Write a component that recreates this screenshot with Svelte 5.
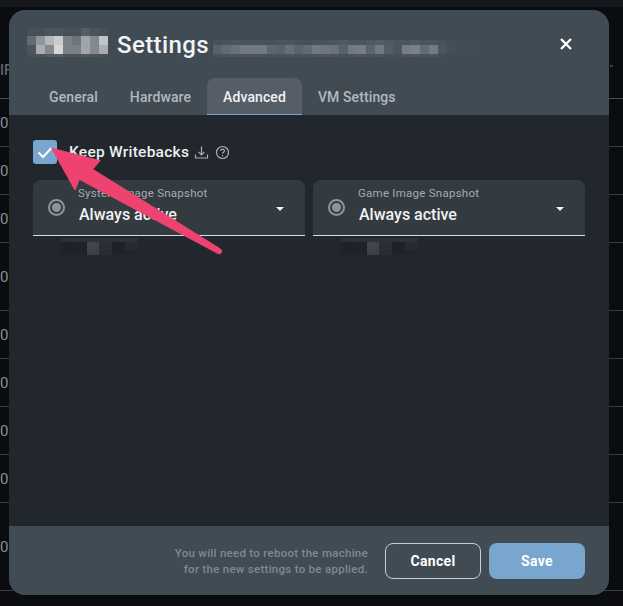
<script lang="ts">
  const rowHeights = [48, 48, 48, 68, 48, 48, 48, 48, 88];
  const tabs = ['General', 'Hardware', 'Advanced', 'VM Settings'];
  const selects = [
    { label: 'System Image Snapshot', value: 'Always active' },
    { label: 'Game Image Snapshot', value: 'Always active' }
  ];

  // pixelated bits of the redacted text, values are white opacity per cell
  const titleCells = [
    [0.03, 0.03, 0.06, 0.05, 0.03, 0.03, 0.1, 0.05, 0.03],
    [0.18, 0.42, 0.6, 0.72, 0.3, 0.24, 0.5, 0.35, 0.68],
    [0.06, 0.55, 0.35, 0.78, 0.3, 0.3, 0.5, 0.35, 0.55],
    [0.03, 0.05, 0.1, 0.1, 0.05, 0.05, 0.08, 0.05, 0.03]
  ];
  const subtitleCells = [
    [0.04, 0.05, 0.05, 0.05, 0.05, 0.04, 0.04, 0.05, 0.06, 0.04, 0.03, 0.05, 0.05, 0.06, 0.08, 0.06, 0.06, 0.08, 0.1, 0.08, 0.06, 0.06, 0.08, 0.06, 0.05, 0.03, 0.01, 0.01],
    [0.12, 0.18, 0.22, 0.26, 0.26, 0.26, 0.15, 0.12, 0.2, 0.14, 0.18, 0.26, 0.24, 0.22, 0.12, 0.26, 0.28, 0.14, 0.26, 0.1, 0.06, 0.28, 0.3, 0.18, 0.26, 0.06, 0.02, 0.01, 0.01],
    [0.04, 0.05, 0.06, 0.06, 0.06, 0.05, 0.04, 0.04, 0.05, 0.04, 0.04, 0.05, 0.06, 0.05, 0.04, 0.05, 0.06, 0.04, 0.05, 0.03, 0.03, 0.06, 0.06, 0.04, 0.05, 0.01]
  ];
  const hintCells = [
    [0.05, 0.05, 0.05, 0.05, 0.05, 0.05],
    [-0.12, -0.1, 0.14, 0.04, -0.12, 0.02],
    [-0.08, -0.1, 0.12, 0.03, -0.1, -0.03]
  ];

  function cell(v: number) {
    return v < 0 ? `background: rgba(0,0,0,${-v})` : `background: rgba(255,255,255,${v})`;
  }
</script>

{#snippet mosaic(cells: number[][], cls: string)}
  <div class="mosaic {cls}" aria-hidden="true">
    {#each cells as row}
      <div class="mosaic-row">
        {#each row as v}
          <span style={cell(v)}></span>
        {/each}
      </div>
    {/each}
  </div>
{/snippet}

<div class="page">
  <div class="strip"></div>
  <div class="table-head">IF<span class="stub"></span></div>
  {#each rowHeights as h}
    <div class="row" style="height: {h - 1}px">0</div>
  {/each}
</div>

<div class="modal">
  <header>
    <div class="title-row">
      {@render mosaic(titleCells, 'title-blur')}
      <h1>Settings</h1>
      {@render mosaic(subtitleCells, 'subtitle-blur')}
      <button class="close" aria-label="Close">
        <svg width="14" height="14" viewBox="0 0 14 14">
          <path d="M2 2 12 12M12 2 2 12" stroke="#fff" stroke-width="2.4" fill="none" />
        </svg>
      </button>
    </div>
    <nav>
      {#each tabs as tab}
        <div class="tab" class:active={tab === 'Advanced'}>{tab}</div>
      {/each}
    </nav>
  </header>

  <main>
    <div class="check-row">
      <span class="checkbox">
        <svg width="24" height="24" viewBox="0 0 24 24">
          <path d="M5.5 12.5 10 17 18.5 8" stroke="#fff" stroke-width="2" fill="none" />
        </svg>
      </span>
      <span class="check-label">Keep Writebacks</span>
      <svg class="icon" width="15" height="15" viewBox="0 0 15 15">
        <path d="M7.5 1.5V9.5M4.5 6.8 7.5 9.8 10.5 6.8M1.5 9.5V13H13.5V9.5" stroke="#a9aeb3" stroke-width="1.2" fill="none" />
      </svg>
      <svg class="icon help" width="15" height="15" viewBox="0 0 15 15">
        <circle cx="7.5" cy="7.5" r="6" stroke="#a9aeb3" stroke-width="1.2" fill="none" />
        <path d="M5.6 6C5.7 4.8 6.5 4.2 7.5 4.2 8.6 4.2 9.4 4.9 9.4 5.8 9.4 7.2 7.5 7.2 7.5 8.8" stroke="#a9aeb3" stroke-width="1.2" fill="none" />
        <circle cx="7.5" cy="10.8" r="0.8" fill="#a9aeb3" />
      </svg>
    </div>

    <div class="selects">
      {#each selects as s}
        <div class="field">
          <div class="select">
            <span class="radio"><span class="dot"></span></span>
            <div class="select-text">
              <div class="select-label">{s.label}</div>
              <div class="select-value">{s.value}</div>
            </div>
            <span class="caret"></span>
          </div>
          {@render mosaic(hintCells, 'hint-blur')}
        </div>
      {/each}
    </div>
  </main>

  <footer>
    <p>You will need to reboot the machine<br />for the new settings to be applied.</p>
    <button class="btn cancel">Cancel</button>
    <button class="btn save">Save</button>
  </footer>
</div>

<svg class="arrow" width="623" height="606" viewBox="0 0 623 606" aria-hidden="true">
  <path
    d="M51.7 148.3 100 160.7 92.7 169.3 220.5 249Q222.5 250.5 221.5 252.5 220 254.5 218 253.5L79.3 179.3 75 190Z"
    fill="#ee4370"
    stroke="#ee4370"
    stroke-width="1"
    stroke-linejoin="round"
  />
</svg>

<style>
  :global(body) {
    margin: 0;
    background: #0a0c10;
    overflow: hidden;
  }

  .page {
    width: 623px;
    height: 606px;
    background: #0a0c10;
    font-family: Roboto, sans-serif;
    color: #8b9095;
    font-size: 15px;
    overflow: hidden;
  }

  .strip {
    height: 7px;
    background: #15191d;
  }

  .table-head {
    position: relative;
    height: 92px;
    box-sizing: border-box;
    padding: 54px 0 0 0;
    border-bottom: 1px solid #4a4e52;
    font-size: 14px;
    font-weight: 500;
    color: #62676c;
    line-height: 18px;
  }

  .stub {
    position: absolute;
    left: 610px;
    top: 58px;
    width: 3px;
    height: 2px;
    background: #3a3e42;
  }

  .row {
    display: flex;
    align-items: center;
    border-bottom: 1px solid #3a3e42;
  }

  .modal {
    position: absolute;
    left: 9px;
    top: 10px;
    width: 600px;
    height: 585px;
    display: flex;
    flex-direction: column;
    border-radius: 16px;
    overflow: hidden;
    background: #22272e;
    font-family: Roboto, sans-serif;
  }

  header {
    height: 105px;
    background: #414b54;
    display: flex;
    flex-direction: column;
    justify-content: space-between;
    flex: none;
  }

  .title-row {
    position: relative;
    height: 68px;
    display: flex;
    align-items: flex-start;
    padding: 18px 0 0 18px;
    box-sizing: border-box;
  }

  h1 {
    margin: -1px 0 0 8px;
    font-size: 24px;
    line-height: 36px;
    font-weight: 500;
    color: #f2f3f4;
    letter-spacing: 0.4px;
  }

  .mosaic-row {
    display: flex;
  }

  .mosaic-row span {
    display: block;
    width: 9px;
    flex: none;
  }

  .title-blur {
    width: 82px;
    flex: none;
  }

  .title-blur .mosaic-row:nth-child(1) span { height: 8px; }
  .title-blur .mosaic-row:nth-child(2) span { height: 9px; }
  .title-blur .mosaic-row:nth-child(3) span { height: 9px; }
  .title-blur .mosaic-row:nth-child(4) span { height: 3px; }

  .subtitle-blur {
    margin: 12px 0 0 4px;
  }

  .subtitle-blur .mosaic-row:nth-child(1) span { height: 5px; }
  .subtitle-blur .mosaic-row:nth-child(2) span { height: 9px; }
  .subtitle-blur .mosaic-row:nth-child(3) span { height: 3px; }

  .hint-blur {
    margin: 2px 0 0 28px;
  }

  .mosaic.hint-blur .mosaic-row span { width: 12.8px; }
  .hint-blur .mosaic-row:nth-child(1) span { height: 4px; }
  .hint-blur .mosaic-row:nth-child(2) span { height: 8px; }
  .hint-blur .mosaic-row:nth-child(3) span { height: 5px; }

  .close {
    position: absolute;
    right: 36px;
    top: 27px;
    width: 14px;
    height: 14px;
    padding: 0;
    border: 0;
    background: none;
    display: flex;
  }

  nav {
    display: flex;
    padding-left: 24px;
    height: 37px;
  }

  .tab {
    padding: 0 16px;
    display: flex;
    align-items: center;
    font-size: 14px;
    font-weight: 500;
    letter-spacing: 0.1px;
    color: #b3b8bc;
    border-radius: 8px 8px 0 0;
    box-sizing: border-box;
  }

  .tab.active {
    background: #555e67;
    color: #f1f2f3;
    border-bottom: 1px solid #74a7d3;
    padding-top: 1px;
  }

  main {
    flex: 1;
    padding: 25px 24px 0;
  }

  .check-row {
    display: flex;
    align-items: center;
    height: 24px;
  }

  .checkbox {
    width: 24px;
    height: 24px;
    background: #78a6cf;
    border-radius: 3px;
    display: flex;
    margin-right: 12px;
  }

  .check-label {
    font-size: 15.5px;
    font-weight: 500;
    color: #eceeef;
    letter-spacing: 0.25px;
    margin-right: 5px;
  }

  .icon.help {
    margin-left: 6px;
  }

  .selects {
    display: flex;
    gap: 8px;
    margin-top: 16px;
  }

  .field {
    width: 272px;
  }

  .select {
    height: 56px;
    box-sizing: border-box;
    background: #343b40;
    border-radius: 8px 8px 0 0;
    border-bottom: 1px solid #d8dcde;
    display: flex;
    align-items: flex-start;
    padding-left: 15px;
    position: relative;
  }

  .radio {
    width: 17px;
    height: 17px;
    box-sizing: border-box;
    border: 2px solid #8f9498;
    border-radius: 50%;
    margin-top: 19px;
    display: flex;
    align-items: center;
    justify-content: center;
    flex: none;
  }

  .dot {
    width: 9px;
    height: 9px;
    border-radius: 50%;
    background: #8f9498;
  }

  .select-text {
    margin-left: 13px;
    padding-top: 6px;
    flex: 1;
  }

  .select-label {
    font-size: 11.5px;
    line-height: 14px;
    letter-spacing: 0.25px;
    color: #a5aaae;
  }

  .select-value {
    margin-top: 4px;
    margin-left: 1px;
    font-size: 16px;
    line-height: 22px;
    font-weight: 500;
    color: #f1f2f3;
  }

  .caret {
    width: 0;
    height: 0;
    border-left: 4px solid transparent;
    border-right: 4px solid transparent;
    border-top: 4px solid #f1f2f3;
    margin: 27px 21px 0 0;
  }

  footer {
    height: 69px;
    flex: none;
    background: #414b54;
    display: flex;
    align-items: center;
    justify-content: flex-end;
    padding: 0 24px;
    box-sizing: border-box;
  }

  footer p {
    margin: 0 17px 0 0;
    text-align: right;
    font-size: 11.5px;
    line-height: 16px;
    font-weight: 500;
    letter-spacing: 0.28px;
    color: #81888f;
  }

  .btn {
    width: 96px;
    height: 36px;
    border-radius: 8px;
    font-family: inherit;
    font-size: 14px;
    font-weight: 700;
    letter-spacing: 0.3px;
    color: #fff;
    box-sizing: border-box;
  }

  .cancel {
    background: none;
    border: 1px solid #c9cdd0;
    margin-right: 8px;
  }

  .save {
    background: #78a6cf;
    border: 0;
  }

  .arrow {
    position: absolute;
    left: 0;
    top: 0;
    pointer-events: none;
  }
</style>
